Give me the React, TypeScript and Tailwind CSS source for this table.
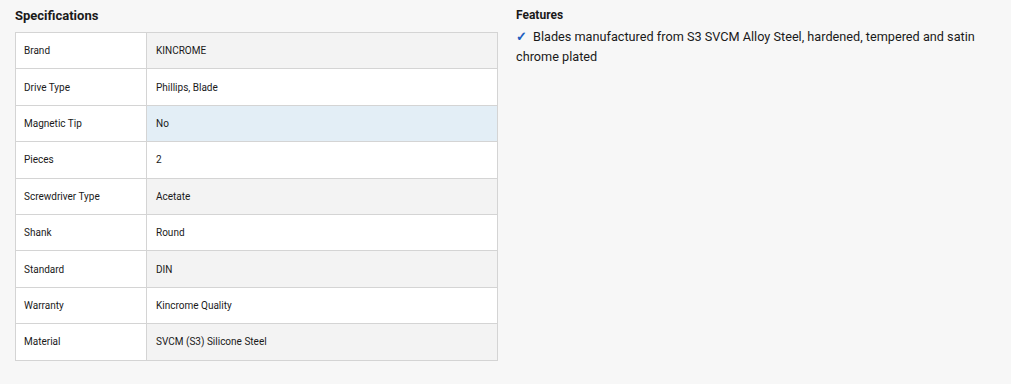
const specs: [string, string][] = [
  ['Brand', 'KINCROME'],
  ['Drive Type', 'Phillips, Blade'],
  ['Magnetic Tip', 'No'],
  ['Pieces', '2'],
  ['Screwdriver Type', 'Acetate'],
  ['Shank', 'Round'],
  ['Standard', 'DIN'],
  ['Warranty', 'Kincrome Quality'],
  ['Material', 'SVCM (S3) Silicone Steel'],
];

export default function App() {
  return (
    <div className="w-[1011px] h-[384px] bg-[#f7f7f7] text-[#1a1a1a] font-['Roboto',sans-serif] flex">
      <section className="w-[501px] pl-[15px] pt-[8px]">
        <h2 className="text-[13px] font-bold leading-[16px] mb-[8px]">Specifications</h2>
        <table className="w-[483px] border-collapse text-[10px]">
          <tbody>
            {specs.map(([label, value], i) => (
              <tr key={label} className="h-[36.4px]">
                <td className="w-[131px] border border-[#d4d4d4] bg-white pl-[8px]">{label}</td>
                <td
                  className={
                    i === 2
                      ? 'border border-[#d4d4d4] bg-[#e3eef6] pl-[9px]'
                      : i % 2 === 0
                      ? 'border border-[#d4d4d4] bg-[#f3f3f3] pl-[9px]'
                      : 'border border-[#d4d4d4] bg-white pl-[9px]'
                  }
                >
                  {value}
                </td>
              </tr>
            ))}
          </tbody>
        </table>
      </section>
      <section className="pl-[15px] pt-[7px] w-[490px]">
        <h3 className="text-[12px] font-bold leading-[16px]">Features</h3>
        <p className="mt-[4px] text-[12.7px] leading-[20px] pr-[10px]">
          <span className="text-[#1f5fbf] font-bold mr-[6px]">✓</span>
          Blades manufactured from S3 SVCM Alloy Steel, hardened, tempered and satin chrome plated
        </p>
      </section>
    </div>
  );
}
